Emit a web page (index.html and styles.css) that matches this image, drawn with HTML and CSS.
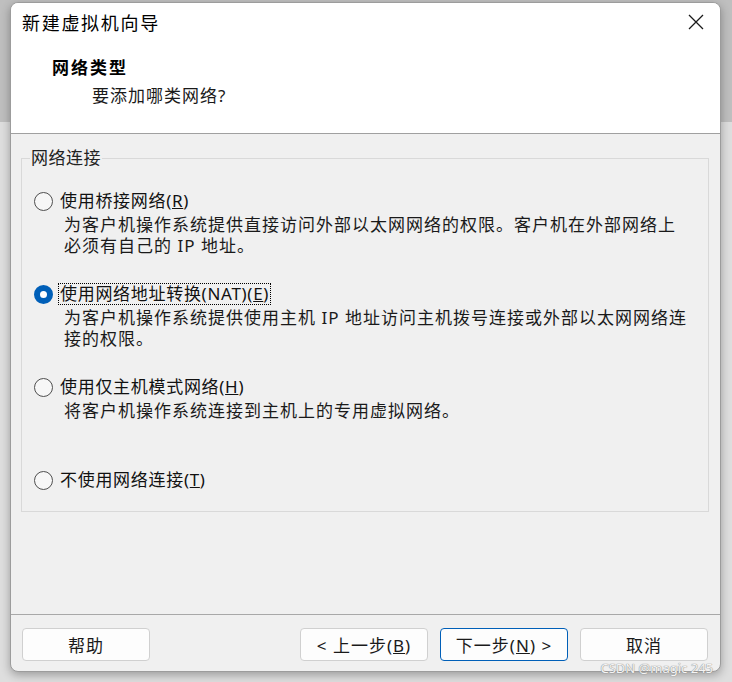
FILE: index.html
```html
<!DOCTYPE html>
<html lang="zh-CN">
<head>
    <meta charset="UTF-8">
    <title>新建虚拟机向导</title>
    <link rel="stylesheet" href="styles.css">
</head>
<body>
    <div class="wizard">
        <div class="header">
            <div class="titlebar">
                <span class="title">新建虚拟机向导</span>
                <svg class="close" width="16" height="16" viewBox="0 0 16 16">
                    <path d="M1 1 L15 15 M15 1 L1 15" stroke="#1a1a1a" stroke-width="1.3" fill="none"/>
                </svg>
            </div>
            <div class="step-title">网络类型</div>
            <div class="step-sub">要添加哪类网络?</div>
        </div>

        <div class="content">
            <fieldset class="group">
                <legend>网络连接</legend>

                <div class="option">
                    <div class="option-row">
                        <span class="radio"></span>
                        <span class="label">使用桥接网络(<u>R</u>)</span>
                    </div>
                    <div class="desc">为客户机操作系统提供直接访问外部以太网网络的权限。客户机在外部网络上<br>必须有自己的 IP 地址。</div>
                </div>

                <div class="option">
                    <div class="option-row">
                        <span class="radio checked"></span>
                        <span class="label focused">使用网络地址转换(NAT)(<u>E</u>)</span>
                    </div>
                    <div class="desc">为客户机操作系统提供使用主机 IP 地址访问主机拨号连接或外部以太网网络连<br>接的权限。</div>
                </div>

                <div class="option">
                    <div class="option-row">
                        <span class="radio"></span>
                        <span class="label">使用仅主机模式网络(<u>H</u>)</span>
                    </div>
                    <div class="desc">将客户机操作系统连接到主机上的专用虚拟网络。</div>
                </div>

                <div class="option">
                    <div class="option-row">
                        <span class="radio"></span>
                        <span class="label">不使用网络连接(<u>T</u>)</span>
                    </div>
                </div>
            </fieldset>
        </div>

        <div class="footer">
            <button class="btn">帮助</button>
            <div class="nav-buttons">
                <button class="btn">&lt; 上一步(<u>B</u>)</button>
                <button class="btn btn-default">下一步(<u>N</u>) &gt;</button>
                <button class="btn">取消</button>
            </div>
        </div>

        <div class="watermark">CSDN @magic 245</div>
    </div>
</body>
</html>
```

FILE: styles.css
```css
body {
    margin: 0;
    height: 682px;
    overflow: hidden;
    font-family: "Noto Sans", "Noto Sans CJK SC", sans-serif;
    background: linear-gradient(to bottom, #bfbfbf 0, #bfbfbf 122px, #dedede 122px);
}

.wizard {
    position: relative;
    box-sizing: border-box;
    width: 711px;
    height: 670px;
    margin: 2px 0 0 10px;
    display: flex;
    flex-direction: column;
    background-color: #f0f0f0;
    border: 1px solid #9c9c9c;
    border-radius: 8px;
    box-shadow: 0 3px 10px rgba(0, 0, 0, 0.3);
}

/* Header */
.header {
    height: 130px;
    background-color: #fff;
    border-bottom: 1px solid #a0a0a0;
    border-radius: 7px 7px 0 0;
}

.titlebar {
    display: flex;
    align-items: center;
    justify-content: space-between;
    height: 38px;
    padding: 0 16px 0 11px;
}

.title {
    font-size: 18px;
    letter-spacing: 1.7px;
    color: #000;
}

.step-title {
    margin: 16px 0 0 41px;
    font-size: 17px;
    line-height: 22px;
    font-weight: bold;
    letter-spacing: 2px;
    color: #000;
}

.step-sub {
    margin: 6px 0 0 81px;
    font-size: 17px;
    line-height: 22px;
    letter-spacing: 1px;
    color: #1a1a1a;
}

/* Group box */
.content {
    flex: 1;
}

.group {
    margin: 13px 11px 0 10px;
    padding: 21px 8px 20px 8px;
    border: 1px solid #d9d9d9;
}

.group legend {
    padding: 0 1px;
    font-size: 17px;
    line-height: 22px;
    letter-spacing: 0.5px;
    color: #222;
}

.option {
    margin: 0 0 27px 4px;
}

.option:last-child {
    margin-bottom: 0;
}

.option-row {
    display: flex;
    align-items: center;
    height: 22px;
}

.radio {
    box-sizing: border-box;
    width: 19px;
    height: 19px;
    margin-right: 5px;
    border: 1.5px solid #4f4f4f;
    border-radius: 50%;
    background-color: #f7f7f7;
}

.radio.checked {
    border: 6px solid #005fb8;
    background-color: #fff;
}

.label {
    padding: 0 1px;
    border: 1px dotted transparent;
    font-size: 17px;
    line-height: 20px;
    letter-spacing: 0.7px;
    color: #111;
    white-space: nowrap;
}

.label.focused {
    border-color: #000;
}

.desc {
    min-height: 42px;
    margin-top: 2px;
    padding-left: 30px;
    font-size: 17px;
    line-height: 21px;
    letter-spacing: 1px;
    color: #1a1a1a;
    white-space: nowrap;
}

/* Footer */
.footer {
    display: flex;
    height: 57px;
    box-sizing: border-box;
    padding: 13px 12px 0 11px;
    border-top: 1px solid #a8a8a8;
}

.nav-buttons {
    display: flex;
    gap: 12px;
    margin-left: auto;
}

.btn {
    width: 128px;
    height: 33px;
    padding: 0;
    font-family: "Noto Sans", "Noto Sans CJK SC", sans-serif;
    font-size: 17px;
    letter-spacing: 1px;
    color: #1a1a1a;
    background-color: #fdfdfd;
    border: 1px solid #d0d0d0;
    border-radius: 4px;
}

.btn-default {
    border-color: #005fb8;
}

.watermark {
    position: absolute;
    right: 7px;
    bottom: -5px;
    font-family: "Noto Sans", sans-serif;
    font-size: 13px;
    line-height: 15px;
    color: #f4f4f4;
    text-shadow: 0 0 1px #888, 0 0 1px #888;
}
```
